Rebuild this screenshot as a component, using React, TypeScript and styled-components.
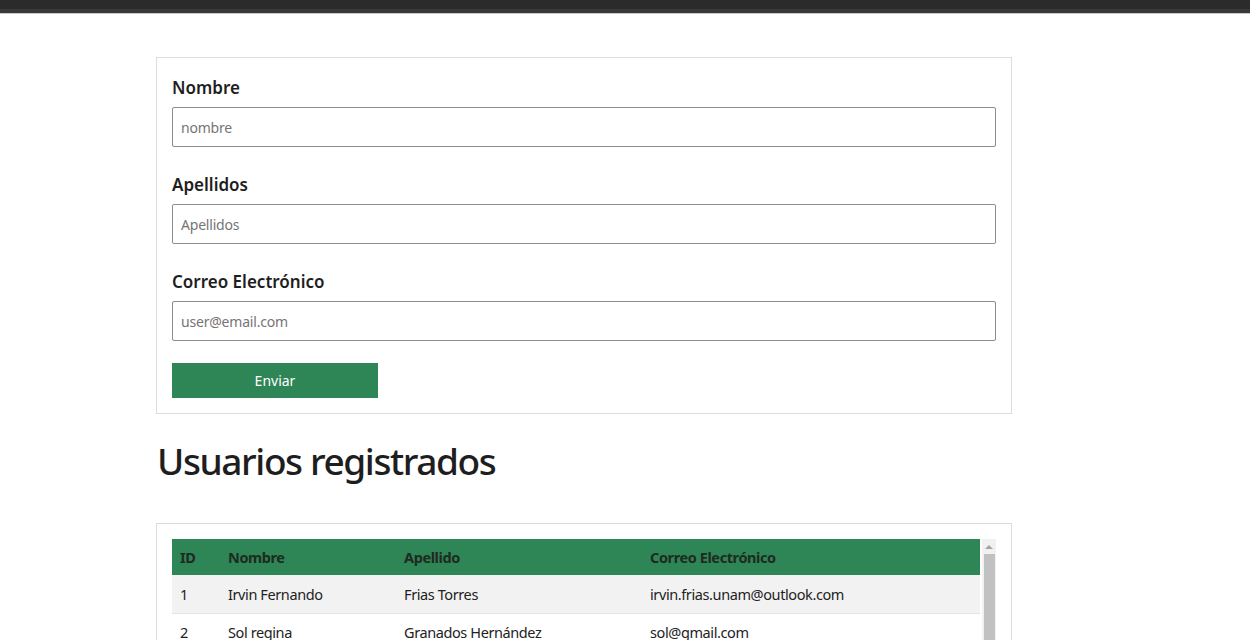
import React from "react";
import styled, { createGlobalStyle } from "styled-components";

const Global = createGlobalStyle`
  html, body { margin: 0; padding: 0; background: #fff; }
  body { font-family: "Noto Sans", "Open Sans", sans-serif; color: #212529; }
  * { box-sizing: border-box; }
`;

const TopBar = styled.div`
  height: 13px;
  background: #2b2b2b;
  border-bottom: 4px solid #393939;
  box-shadow: 0 1px 0 #c8c8c8;
`;

const Page = styled.main`
  width: 856px;
  margin-left: 156px;
  padding-top: 44px;
`;

const Card = styled.section`
  border: 1px solid #dcdcdc;
  padding: 15px;
`;

const FormCard = styled(Card)`
  padding-top: 16px;
  padding-bottom: 15px;
`;

const Group = styled.div`
  display: flex;
  flex-direction: column;
  gap: 7px;
  margin-bottom: 24px;
`;

const Label = styled.label`
  font-size: 17px;
  font-weight: 600;
  line-height: 26px;
  padding-top: 1px;
  margin-bottom: -1px;
  color: #1e1e1e;
`;

const Input = styled.input`
  height: 40px;
  width: 100%;
  border: 1px solid #8c8c8c;
  border-radius: 2px;
  padding: 0 8px;
  font-family: inherit;
  font-size: 14px;
  letter-spacing: -0.2px;
  color: #333;
  &::placeholder { color: #757575; }
`;

const Button = styled.button`
  margin-top: -2px;
  width: 206px;
  height: 35px;
  background: #2e8555;
  color: #fff;
  border: none;
  font-family: inherit;
  font-size: 14px;
  cursor: pointer;
`;

const Heading = styled.h2`
  margin: 23px 0 38px 1px;
  font-size: 37px;
  font-weight: 500;
  letter-spacing: -1.4px;
  line-height: 48px;
  color: #1e1e1e;
`;

const Scroller = styled.div`
  display: flex;
  align-items: flex-start;
  gap: 2px;
  height: 240px;
  overflow: hidden;
`;

const TableArea = styled.div`
  flex: 1;
  min-width: 0;
`;

const ScrollTrack = styled.div`
  width: 14px;
  height: 100%;
  background: #f1f1f1;
  display: flex;
  flex-direction: column;
  align-items: center;
`;

const ScrollUp = styled.div`
  height: 15px;
  width: 100%;
  display: flex;
  align-items: center;
  justify-content: center;
  &::before {
    content: "";
    border-left: 4px solid transparent;
    border-right: 4px solid transparent;
    border-bottom: 4px solid #a3a3a3;
  }
`;

const Thumb = styled.div`
  width: 11px;
  height: 180px;
  background: #c1c1c1;
`;

const Table = styled.table`
  width: 100%;
  border-collapse: collapse;
  font-size: 14.5px;
  letter-spacing: -0.4px;
  color: #222;
`;

const HeadCell = styled.th<{ $w?: number }>`
  background: #2e8555;
  text-align: left;
  font-weight: 700;
  height: 36px;
  padding: 0 8px;
  width: ${(p) => (p.$w ? `${p.$w}px` : "auto")};
  color: #1f2a22;
`;

const Row = styled.tr<{ $odd: boolean }>`
  background: ${(p) => (p.$odd ? "#f2f2f2" : "#fff")};
  border-bottom: 1px solid #e4e4e4;
`;

const Cell = styled.td`
  height: 38px;
  padding: 0 8px;
`;

const users = [
  { id: 1, nombre: "Irvin Fernando", apellido: "Frias Torres", correo: "irvin.frias.unam@outlook.com" },
  { id: 2, nombre: "Sol regina", apellido: "Granados Hernández", correo: "sol@gmail.com" },
  { id: 3, nombre: "María", apellido: "López Díaz", correo: "maria@gmail.com" },
  { id: 4, nombre: "Juan", apellido: "Pérez Ruiz", correo: "juan@gmail.com" },
  { id: 5, nombre: "Ana", apellido: "Martínez Gómez", correo: "ana@gmail.com" },
];

export default function App() {
  return (
    <>
      <Global />
      <TopBar />
      <Page>
        <FormCard>
          <Group>
            <Label htmlFor="nombre">Nombre</Label>
            <Input id="nombre" placeholder="nombre" />
          </Group>
          <Group>
            <Label htmlFor="apellidos">Apellidos</Label>
            <Input id="apellidos" placeholder="Apellidos" />
          </Group>
          <Group>
            <Label htmlFor="correo">Correo Electrónico</Label>
            <Input id="correo" placeholder="user@email.com" />
          </Group>
          <Button>Enviar</Button>
        </FormCard>
        <Heading>Usuarios registrados</Heading>
        <Card>
          <Scroller>
            <TableArea>
              <Table>
                <thead>
                  <tr>
                    <HeadCell $w={48}>ID</HeadCell>
                    <HeadCell $w={176}>Nombre</HeadCell>
                    <HeadCell $w={246}>Apellido</HeadCell>
                    <HeadCell>Correo Electrónico</HeadCell>
                  </tr>
                </thead>
                <tbody>
                  {users.map((u, i) => (
                    <Row key={u.id} $odd={i % 2 === 0}>
                      <Cell>{u.id}</Cell>
                      <Cell>{u.nombre}</Cell>
                      <Cell>{u.apellido}</Cell>
                      <Cell>{u.correo}</Cell>
                    </Row>
                  ))}
                </tbody>
              </Table>
            </TableArea>
            <ScrollTrack>
              <ScrollUp />
              <Thumb />
            </ScrollTrack>
          </Scroller>
        </Card>
      </Page>
    </>
  );
}
